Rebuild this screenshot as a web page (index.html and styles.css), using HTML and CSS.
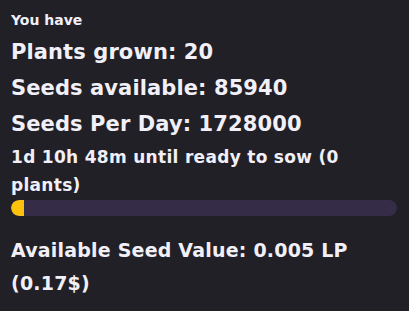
FILE: index.html
```html
<!DOCTYPE html>
<html lang="en">
<head>
    <meta charset="UTF-8">
    <meta name="viewport" content="width=device-width, initial-scale=1.0">
    <title>Garden</title>
    <link rel="stylesheet" href="styles.css">
</head>
<body>
    <div class="stats">
        <div class="label">You have</div>
        <div class="stat">Plants grown: 20</div>
        <div class="stat">Seeds available: 85940</div>
        <div class="stat">Seeds Per Day: 1728000</div>
        <div class="timer">1d 10h 48m until ready to sow (0 plants)</div>
        <div class="bar">
            <div class="bar-fill" style="width: 3.4%"></div>
        </div>
        <div class="value">Available Seed Value: 0.005 LP (0.17$)</div>
    </div>
</body>
</html>
```

FILE: styles.css
```css
* {
    margin: 0;
    padding: 0;
}
body {
    background-color: #212026;
    color: #f1eff8;
    font-family: "DejaVu Sans", sans-serif;
    font-weight: 700;
}
.stats {
    padding: 10px 12px 0 11px;
}
.label {
    font-size: 14px;
    line-height: 20px;
    margin-bottom: 4px;
}
.stat {
    font-size: 21px;
    line-height: 36px;
    letter-spacing: 0.1px;
}
.timer {
    font-size: 17px;
    line-height: 28px;
    letter-spacing: 0.3px;
    margin-top: 1px;
    width: 360px;
}
.bar {
    height: 16px;
    border-radius: 8px;
    background-color: #352c47;
    overflow: hidden;
    margin-top: 1px;
}
.bar-fill {
    height: 100%;
    background-color: #fcc10a;
    border-radius: 8px 0 0 8px;
}
.value {
    font-size: 19px;
    line-height: 33px;
    letter-spacing: 0.2px;
    margin-top: 18px;
    width: 370px;
}
```
